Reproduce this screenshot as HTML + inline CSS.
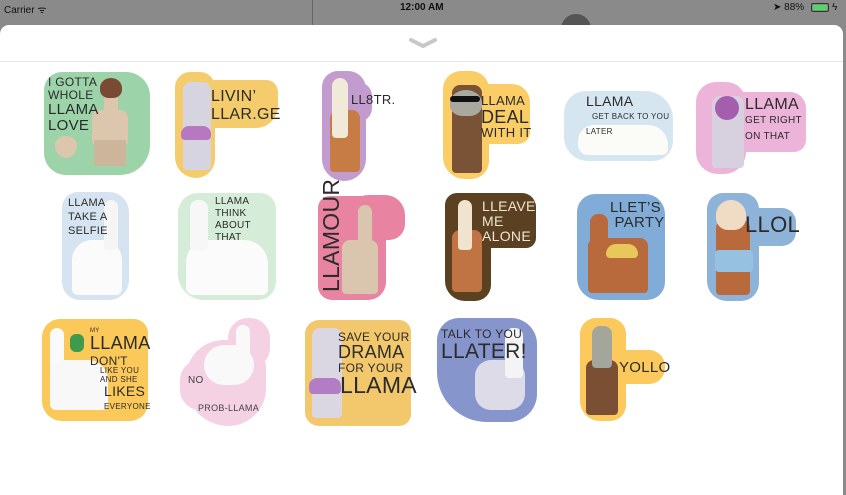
<!DOCTYPE html>
<html><head><meta charset="utf-8"><style>
*{margin:0;padding:0;box-sizing:border-box}
body{width:846px;height:485px;overflow:hidden;background:#8a8a8a;font-family:"Liberation Sans",sans-serif;position:relative}
.sb{position:absolute;top:0;left:0;width:846px;height:14px;font-size:10px;color:#111}
.sheet{position:absolute;left:0;top:25px;width:843px;height:470px;background:#fff;border-radius:9px 9px 0 0}
.div{position:absolute;left:0;top:61px;width:843px;height:1px;background:#e6e6e6}
.a{position:absolute}
.b{position:absolute;border-radius:14px}
.t{position:absolute;color:#2b2b2b;font-family:"Liberation Sans Narrow","Liberation Sans",sans-serif;font-weight:normal;line-height:1;letter-spacing:0.3px;white-space:nowrap}
.l{position:absolute;border-radius:8px 8px 4px 4px}
.h{position:absolute;border-radius:50% 50% 40% 40%}
</style></head><body>
<div class="sb"><span style="position:absolute;left:4px;top:2px">Carrier ᯤ</span><span style="position:absolute;left:400px;top:2px;font-weight:bold">12:00 AM</span><span style="position:absolute;left:773px;top:2px">➤ 88%</span><span style="position:absolute;left:811px;top:3px;width:18px;height:9px;border:1px solid #333;border-radius:2px;padding:1px"><span style="display:block;width:14px;height:5px;background:#4cd964"></span></span><span style="position:absolute;left:832px;top:2px">ϟ</span></div>
<div class="a" style="left:312px;top:0;width:1px;height:25px;background:#666"></div>
<div class="a" style="left:561px;top:14px;width:30px;height:30px;border-radius:50%;background:#555"></div>
<div class="sheet"></div>
<div class="div"></div>
<svg class="a" style="left:408px;top:37px" width="30" height="12"><path d="M3 3 L15 9 L27 3" stroke="#c8c8cc" stroke-width="4" fill="none" stroke-linecap="round"/></svg>

<!-- 1 -->
<div class="b" style="left:44px;top:72px;width:106px;height:103px;background:#9dd3a9;border-radius:18px 24px 30px 22px"></div>
<div class="l" style="left:92px;top:110px;width:36px;height:35px;background:#dcc6ae"></div>
<div class="l" style="left:104px;top:80px;width:14px;height:40px;background:#dcc6ae"></div>
<div class="h" style="left:100px;top:78px;width:22px;height:20px;background:#7a4a35"></div>
<div class="l" style="left:94px;top:140px;width:32px;height:26px;background:#cdb59c;border-radius:2px"></div>
<div class="h" style="left:55px;top:136px;width:22px;height:22px;background:#dcc6ae;border-radius:50% 50% 50% 50%/40% 40% 60% 60%"></div>
<div class="t" style="left:48px;top:76px;font-size:12px;line-height:13px">I GOTTA<br>WHOLE<br><span style="font-size:15px;line-height:16px">LLAMA<br>LOVE</span></div>
<!-- 2 -->
<div class="b" style="left:175px;top:72px;width:40px;height:106px;background:#f4cc6c;border-radius:16px 16px 20px 22px"></div>
<div class="b" style="left:200px;top:80px;width:78px;height:48px;background:#f4cc6c;border-radius:10px 12px 22px 10px"></div>
<div class="l" style="left:183px;top:82px;width:28px;height:88px;background:#d7d4e2"></div>
<div class="l" style="left:181px;top:126px;width:30px;height:14px;background:#b679bf"></div>
<div class="t" style="left:211px;top:88px;font-size:16px;line-height:18px">LIVIN’<br>LLAR.GE</div>
<!-- 3 -->
<div class="b" style="left:322px;top:71px;width:44px;height:110px;background:#c29bcf;border-radius:16px 18px 22px 22px"></div>
<div class="b" style="left:340px;top:82px;width:32px;height:40px;background:#c29bcf;border-radius:8px 14px 14px 8px"></div>
<div class="l" style="left:330px;top:110px;width:30px;height:62px;background:#c77c45"></div>
<div class="l" style="left:332px;top:78px;width:16px;height:60px;background:#f2ead8"></div>
<div class="t" style="left:351px;top:93px;font-size:13px">LL8TR.</div>
<!-- 4 -->
<div class="b" style="left:443px;top:71px;width:46px;height:108px;background:#fbcd66;border-radius:18px 18px 18px 22px"></div>
<div class="b" style="left:470px;top:84px;width:60px;height:60px;background:#fbcd66;border-radius:12px 18px 12px 10px"></div>
<div class="l" style="left:452px;top:85px;width:30px;height:88px;background:#7a5236"></div>
<div class="h" style="left:450px;top:90px;width:32px;height:26px;background:#a9a9a0"></div>
<div class="a" style="left:450px;top:96px;width:30px;height:6px;background:#111;border-radius:3px"></div>
<div class="t" style="left:481px;top:94px;font-size:13px;line-height:14px">LLAMA<br><span style="font-size:18px;line-height:18px">DEAL</span><br>WITH IT</div>
<!-- 5 -->
<div class="b" style="left:564px;top:91px;width:109px;height:70px;background:#d6e6f1;border-radius:22px 28px 20px 24px"></div>
<div class="l" style="left:578px;top:125px;width:90px;height:30px;background:#fbfbf8;border-radius:16px 20px 6px 10px"></div>
<div class="t" style="left:586px;top:95px;font-size:14px;line-height:13px">LLAMA<br><span style="font-size:8px;padding-left:6px">GET BACK TO YOU</span><br><span style="font-size:8px">LATER</span></div>
<!-- 6 -->
<div class="b" style="left:696px;top:82px;width:50px;height:92px;background:#ebb4d8;border-radius:20px 20px 22px 22px"></div>
<div class="b" style="left:726px;top:92px;width:80px;height:60px;background:#ebb4d8;border-radius:10px 16px 12px 8px"></div>
<div class="l" style="left:712px;top:96px;width:32px;height:72px;background:#d7d0de"></div>
<div class="a" style="left:715px;top:96px;width:24px;height:24px;border-radius:50%;background:#a55dae"></div>
<div class="t" style="left:745px;top:98px;font-size:16px;line-height:14px">LLAMA<br><span style="font-size:10px">GET RIGHT<br>ON THAT</span></div>

<!-- 7 -->
<div class="b" style="left:62px;top:192px;width:67px;height:108px;background:#d5e4f0;border-radius:16px 20px 20px 18px"></div>
<div class="l" style="left:72px;top:240px;width:50px;height:55px;background:#fbfbfb;border-radius:20px 20px 6px 6px"></div>
<div class="l" style="left:104px;top:200px;width:14px;height:50px;background:#f5f5f5"></div>
<div class="t" style="left:68px;top:196px;font-size:11px;line-height:14px">LLAMA<br>TAKE A<br>SELFIE</div>
<!-- 8 -->
<div class="b" style="left:178px;top:193px;width:98px;height:107px;background:#d5ecd9;border-radius:20px 16px 18px 26px"></div>
<div class="l" style="left:186px;top:240px;width:82px;height:55px;background:#fbfbfb;border-radius:22px 24px 6px 8px"></div>
<div class="l" style="left:190px;top:200px;width:18px;height:50px;background:#f7f7f7"></div>
<div class="t" style="left:215px;top:196px;font-size:10px;line-height:12px">LLAMA<br>THINK<br>ABOUT<br>THAT</div>
<!-- 9 -->
<div class="b" style="left:318px;top:196px;width:68px;height:104px;background:#e884a2;border-radius:12px 18px 18px 14px"></div>
<div class="b" style="left:350px;top:195px;width:55px;height:45px;background:#e884a2;border-radius:18px 20px 16px 10px"></div>
<div class="l" style="left:342px;top:240px;width:36px;height:54px;background:#dac5ae"></div>
<div class="l" style="left:358px;top:205px;width:14px;height:42px;background:#dac5ae"></div>
<div class="t" style="left:320px;top:292px;font-size:23px;transform:rotate(-90deg);transform-origin:0 0">LLAMOUR</div>
<!-- 10 -->
<div class="b" style="left:445px;top:193px;width:46px;height:108px;background:#5b4122;border-radius:12px 14px 16px 20px"></div>
<div class="b" style="left:470px;top:193px;width:66px;height:55px;background:#5b4122;border-radius:8px 14px 10px 8px"></div>
<div class="l" style="left:452px;top:230px;width:30px;height:62px;background:#c17443"></div>
<div class="l" style="left:458px;top:200px;width:14px;height:50px;background:#f1e4cf"></div>
<div class="t" style="left:482px;top:199px;font-size:14px;line-height:15px;color:#efe6d2">LLEAVE<br>ME<br>ALONE</div>
<!-- 11 -->
<div class="b" style="left:577px;top:194px;width:88px;height:106px;background:#82acd8;border-radius:18px 20px 18px 22px"></div>
<div class="l" style="left:588px;top:238px;width:60px;height:55px;background:#b86a3c"></div>
<div class="l" style="left:590px;top:214px;width:18px;height:36px;background:#b86a3c"></div>
<div class="a" style="left:606px;top:244px;width:32px;height:14px;background:#e8c85a;border-radius:10px 10px 4px 4px"></div>
<div class="t" style="left:610px;top:200px;font-size:15px;line-height:15px">LLET’S<br>&nbsp;PARTY</div>
<!-- 12 -->
<div class="b" style="left:707px;top:193px;width:52px;height:108px;background:#8eb3d9;border-radius:16px 16px 18px 20px"></div>
<div class="b" style="left:740px;top:208px;width:56px;height:38px;background:#8eb3d9;border-radius:8px 14px 14px 8px"></div>
<div class="l" style="left:716px;top:220px;width:34px;height:75px;background:#b86a3c"></div>
<div class="h" style="left:716px;top:200px;width:30px;height:30px;background:#f0dcc5"></div>
<div class="a" style="left:715px;top:250px;width:38px;height:22px;background:#97c1e0;border-radius:4px"></div>
<div class="t" style="left:745px;top:214px;font-size:22px">LLOL</div>

<!-- 13 -->
<div class="b" style="left:42px;top:319px;width:106px;height:102px;background:#fbc959;border-radius:18px 14px 18px 20px"></div>
<div class="l" style="left:50px;top:328px;width:14px;height:50px;background:#fafafa"></div>
<div class="l" style="left:50px;top:360px;width:58px;height:50px;background:#f8f8f8;border-radius:16px 20px 6px 6px"></div>
<div class="a" style="left:70px;top:334px;width:14px;height:18px;background:#3e9b4b;border-radius:6px"></div>
<div class="t" style="left:90px;top:328px;font-size:6px;line-height:7px">MY</div>
<div class="t" style="left:90px;top:335px;font-size:18px;line-height:16px">LLAMA<br><span style="font-size:12px">DON'T</span></div>
<div class="t" style="left:100px;top:366px;font-size:8px;line-height:9px">LIKE YOU<br>AND SHE</div>
<div class="t" style="left:104px;top:385px;font-size:14px;line-height:13px">LIKES<br><span style="font-size:8px">EVERYONE</span></div>
<!-- 14 -->
<div class="b" style="left:186px;top:340px;width:80px;height:86px;background:#f4d2e4;border-radius:40px 30px 40px 45px"></div>
<div class="b" style="left:228px;top:318px;width:42px;height:50px;background:#f4d2e4;border-radius:20px"></div>
<div class="b" style="left:180px;top:360px;width:40px;height:50px;background:#f4d2e4;border-radius:20px"></div>
<div class="l" style="left:204px;top:345px;width:50px;height:40px;background:#f9f9f9;border-radius:20px"></div>
<div class="l" style="left:236px;top:325px;width:14px;height:34px;background:#f9f9f9"></div>
<div class="t" style="left:188px;top:376px;font-size:10px;color:#444">NO</div>
<div class="t" style="left:198px;top:404px;font-size:9px;color:#444">PROB-LLAMA</div>
<!-- 15 -->
<div class="b" style="left:305px;top:320px;width:106px;height:106px;background:#f3c86c;border-radius:14px 12px 12px 14px"></div>
<div class="l" style="left:312px;top:328px;width:30px;height:90px;background:#dad7e2"></div>
<div class="l" style="left:309px;top:378px;width:32px;height:16px;background:#b37dc3"></div>
<div class="t" style="left:338px;top:331px;font-size:12px;line-height:12px">SAVE YOUR</div>
<div class="t" style="left:338px;top:344px;font-size:18px;line-height:17px">DRAMA</div>
<div class="t" style="left:338px;top:362px;font-size:12px">FOR YOUR</div>
<div class="t" style="left:340px;top:374px;font-size:23px">LLAMA</div>
<!-- 16 -->
<div class="b" style="left:437px;top:318px;width:100px;height:104px;background:#8795cd;border-radius:22px 26px 28px 50px"></div>
<div class="l" style="left:475px;top:360px;width:50px;height:50px;background:#dedbe8;border-radius:16px"></div>
<div class="l" style="left:505px;top:328px;width:18px;height:50px;background:#f4f4f4"></div>
<div class="t" style="left:441px;top:328px;font-size:12px">TALK TO YOU</div>
<div class="t" style="left:441px;top:341px;font-size:21px">LLATER!</div>
<!-- 17 -->
<div class="b" style="left:580px;top:318px;width:46px;height:103px;background:#fbc95c;border-radius:16px 16px 16px 20px"></div>
<div class="b" style="left:600px;top:350px;width:65px;height:34px;background:#fbc95c;border-radius:10px 16px 16px 6px"></div>
<div class="l" style="left:586px;top:360px;width:32px;height:55px;background:#7b4f34"></div>
<div class="l" style="left:592px;top:326px;width:20px;height:42px;background:#a4a69c"></div>
<div class="t" style="left:619px;top:360px;font-size:15px">YOLLO</div>
</body></html>
